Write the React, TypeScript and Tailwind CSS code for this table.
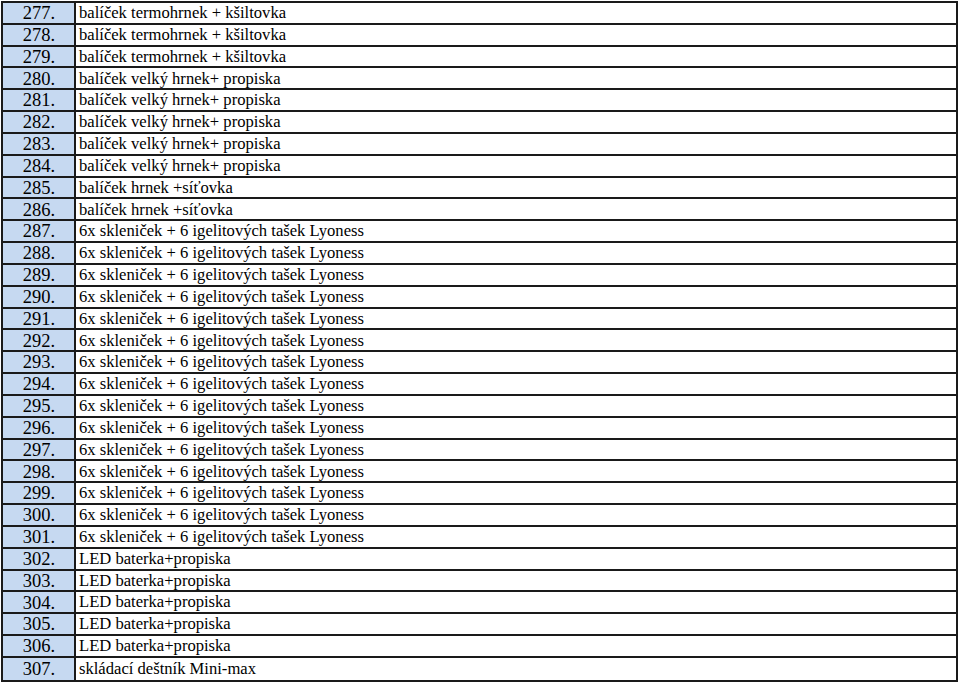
const rows: [number, string][] = [
  [277, 'balíček termohrnek + kšiltovka'],
  [278, 'balíček termohrnek + kšiltovka'],
  [279, 'balíček termohrnek + kšiltovka'],
  [280, 'balíček velký hrnek+ propiska'],
  [281, 'balíček velký hrnek+ propiska'],
  [282, 'balíček velký hrnek+ propiska'],
  [283, 'balíček velký hrnek+ propiska'],
  [284, 'balíček velký hrnek+ propiska'],
  [285, 'balíček hrnek +síťovka'],
  [286, 'balíček hrnek +síťovka'],
  ...Array.from({ length: 15 }, (_, i): [number, string] => [
    287 + i,
    '6x skleniček + 6 igelitových tašek Lyoness',
  ]),
  ...Array.from({ length: 5 }, (_, i): [number, string] => [302 + i, 'LED baterka+propiska']),
  [307, 'skládací deštník Mini-max'],
];

export default function App() {
  return (
    <div className="min-h-screen bg-white pt-[1px] pl-[1px]">
      <div
        className="w-[957px] border-2 border-[#1a1a1a] leading-none text-black"
        style={{ fontFamily: '"Liberation Serif", "DejaVu Serif", serif' }}
      >
        {rows.map(([n, label], i) => (
          <div
            key={n}
            className={`flex h-[21.84px] ${i < rows.length - 1 ? 'border-b-2 border-[#1a1a1a]' : ''}`}
          >
            <div className="flex w-[73px] shrink-0 items-center justify-center border-r-2 border-[#1a1a1a] bg-[#c6d9f1] pt-[1px] pl-[1px] text-[18.5px]">
              {n}.
            </div>
            <div className="flex flex-1 items-center pl-[3px] pt-[1px] text-[16.6px]">{label}</div>
          </div>
        ))}
      </div>
    </div>
  );
}
